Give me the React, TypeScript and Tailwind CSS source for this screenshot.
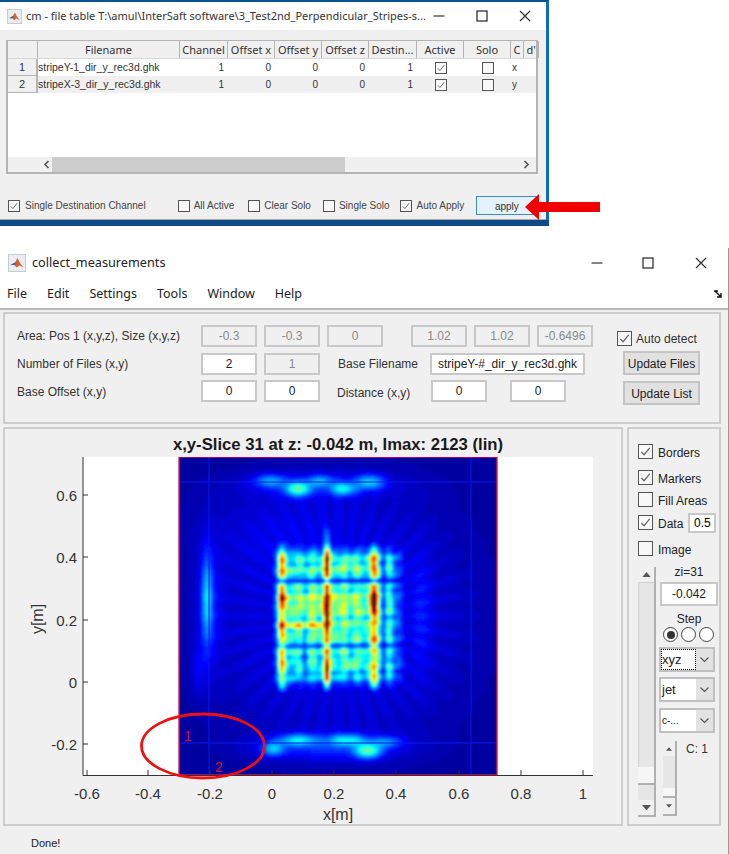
import { useMemo } from "react";

const uiFont = "[font-family:'Noto_Sans',sans-serif]";
const matFont = "[font-family:'Liberation_Sans',sans-serif]";

const columns = [
  { label: "", w: 30 },
  { label: "Filename", w: 142 },
  { label: "Channel", w: 48 },
  { label: "Offset x", w: 47 },
  { label: "Offset y", w: 47 },
  { label: "Offset z", w: 47 },
  { label: "Destin...", w: 48 },
  { label: "Active", w: 47 },
  { label: "Solo", w: 47 },
  { label: "C", w: 13 },
  { label: "d'", w: 15 },
];

const rows = [
  { n: "1", file: "stripeY-1_dir_y_rec3d.ghk", tag: "x", bg: "bg-white" },
  { n: "2", file: "stripeX-3_dir_y_rec3d.ghk", tag: "y", bg: "bg-[#f0f0f0]" },
];

function CheckBox({ checked, size = "w-[15px] h-[15px]" }: { checked?: boolean; size?: string }) {
  return (
    <span className={`${size} shrink-0 border border-[#555] bg-[#f8f8f8] block`}>
      {checked && (
        <svg viewBox="0 0 14 14" className="w-full h-full">
          <path d="M2.5 7.5 L5.5 10.5 L11.5 3" fill="none" stroke="#666" strokeWidth="1.3" />
        </svg>
      )}
    </span>
  );
}

function WinControls({ gapA, gapB }: { gapA: string; gapB: string }) {
  return (
    <div className="flex items-center">
      <svg width="12" height="12" viewBox="0 0 12 12">
        <path d="M0.5 6 H11.5" stroke="#333" strokeWidth="1.2" />
      </svg>
      <svg width="12" height="12" viewBox="0 0 12 12" className={gapA}>
        <rect x="1" y="1" width="10" height="10" fill="none" stroke="#333" strokeWidth="1.3" />
      </svg>
      <svg width="12" height="12" viewBox="0 0 12 12" className={gapB}>
        <path d="M1 1 L11 11 M11 1 L1 11" stroke="#333" strokeWidth="1.2" />
      </svg>
    </div>
  );
}

function MatlabIcon({ className }: { className: string }) {
  return (
    <span className={`${className} block bg-[#e8eef4] border border-[#c4ccd4]`}>
      <svg viewBox="0 0 16 16" className="w-full h-full">
        <path d="M1.5 10 L6 7.5 L8.5 3 L11 8 L14.5 12.5 L10.5 10.5 L7.5 12.5 L5.5 10 Z" fill="#d9622b" />
        <path d="M1.5 10 L6 7.5 L7.5 9 L5.5 10 Z" fill="#2c6fb0" />
      </svg>
    </span>
  );
}

function FileTableWindow() {
  return (
    <div className={`w-[549px] h-[226px] shrink-0 flex flex-col border-t-[2px] border-t-[#0d5390] border-r-[3px] border-r-[#0f6cb4] ${uiFont}`}>
      <div className="h-[28px] bg-white flex items-center justify-between pl-[7px] pr-[15px] shrink-0">
        <div className="flex items-center gap-[4px]">
          <MatlabIcon className="w-[15px] h-[15px]" />
          <span className="text-[11px] text-[#333] whitespace-nowrap">
            cm - file table T:\amul\InterSaft software\3_Test2nd_Perpendicular_Stripes-s...
          </span>
        </div>
        <WinControls gapA="ml-[31px]" gapB="ml-[31px]" />
      </div>
      <div className="flex-1 bg-[#f0f0f0] pt-[10px] pl-[7px] pr-[8px] border-b border-b-[#a8a8a8] flex flex-col">
        <div className="w-[532px] h-[134px] -ml-[1px] bg-white border-x-2 border-t border-b-2 border-[#b4b4b4] flex flex-col shrink-0">
          <div className="h-[18px] flex bg-[#f0f0f0] border-b border-[#d8d8d8] shrink-0">
            {columns.map((c, i) => (
              <div
                key={i}
                style={{ width: c.w }}
                className="shrink-0 border-r border-[#b4b4b4] text-[11px] leading-[18px] text-[#333] text-center overflow-hidden whitespace-nowrap"
              >
                {c.label}
              </div>
            ))}
          </div>
          {rows.map((r) => (
            <div key={r.n} className={`h-[17px] flex items-center shrink-0 ${r.bg} ${matFont} text-[10px] text-[#333]`}>
              <div className="w-[30px] h-full shrink-0 bg-[#f0f0f0] border-r-2 border-b border-[#b4b4b4] text-center text-[11px] leading-[17px]">
                {r.n}
              </div>
              <div className="w-[142px] shrink-0 text-[10.5px] whitespace-nowrap">{r.file}</div>
              <div className="w-[48px] shrink-0 text-right pr-[4px]">1</div>
              <div className="w-[47px] shrink-0 text-right pr-[4px]">0</div>
              <div className="w-[47px] shrink-0 text-right pr-[4px]">0</div>
              <div className="w-[47px] shrink-0 text-right pr-[4px]">0</div>
              <div className="w-[48px] shrink-0 text-right pr-[4px]">1</div>
              <div className="w-[47px] shrink-0 flex justify-center">
                <CheckBox checked size="w-[12px] h-[12px]" />
              </div>
              <div className="w-[47px] shrink-0 flex justify-center">
                <CheckBox size="w-[12px] h-[12px]" />
              </div>
              <div className="w-[13px] shrink-0 pl-[1px]">{r.tag}</div>
            </div>
          ))}
          <div className="flex-1" />
          <div className="h-[15px] flex items-center bg-[#f0f0f0] shrink-0">
            <div className="w-[44px] h-full shrink-0 flex items-center justify-end pr-[2px]">
              <svg width="7" height="9" viewBox="0 0 7 9">
                <path d="M5.5 1 L2 4.5 L5.5 8" fill="none" stroke="#555" strokeWidth="1.6" />
              </svg>
            </div>
            <div className="w-[293px] h-full shrink-0 bg-[#cdcdcd]" />
            <div className="flex-1 flex justify-end pr-[6px]">
              <svg width="7" height="9" viewBox="0 0 7 9">
                <path d="M1.5 1 L5 4.5 L1.5 8" fill="none" stroke="#555" strokeWidth="1.6" />
              </svg>
            </div>
          </div>
        </div>
        <div className={`mt-[22px] flex items-center ${matFont} text-[10px] text-[#444]`}>
          <div className="flex items-center gap-[5px] pl-[1px]">
            <CheckBox checked size="w-[12px] h-[12px]" />
            <span className="whitespace-nowrap">Single Destination Channel</span>
          </div>
          <div className="flex items-center gap-[4px] ml-[32px]">
            <CheckBox size="w-[12px] h-[12px]" />
            <span>All Active</span>
          </div>
          <div className="flex items-center gap-[4px] ml-[14px]">
            <CheckBox size="w-[12px] h-[12px]" />
            <span>Clear Solo</span>
          </div>
          <div className="flex items-center gap-[4px] ml-[12px]">
            <CheckBox size="w-[12px] h-[12px]" />
            <span>Single Solo</span>
          </div>
          <div className="flex items-center gap-[5px] ml-[10px]">
            <CheckBox checked size="w-[12px] h-[12px]" />
            <span>Auto Apply</span>
          </div>
          <div className="w-[61px] h-[19px] ml-[12px] bg-[#e5f1fb] border border-[#3a8bd6] text-center leading-[20px] text-[#333]">
            apply
          </div>
        </div>
      </div>
      <div className="h-[6px] bg-[#0d4a86] -mr-[3px] shrink-0" />
    </div>
  );
}

function Field({ value, disabled, w = "w-[56px]" }: { value: string; disabled?: boolean; w?: string }) {
  return (
    <div
      className={`${w} h-[22px] shrink-0 border-2 border-[#c8c8c8] text-center text-[12px] leading-[18px] ${
        disabled ? "bg-[#f0f0f0] text-[#8a8a8a]" : "bg-white text-[#222]"
      }`}
    >
      {value}
    </div>
  );
}

function ScrollArrow({ up, small }: { up?: boolean; small?: boolean }) {
  const s = small ? 6 : 9;
  return (
    <div className="flex-1 flex items-center justify-center">
      <svg width={s} height={s / 2 + 1} viewBox="0 0 10 6">
        <path d={up ? "M0 6 L5 0 L10 6 Z" : "M0 0 L5 6 L10 0 Z"} fill="#555" />
      </svg>
    </div>
  );
}

function Combo({ label, focus, tiny }: { label: string; focus?: boolean; tiny?: boolean }) {
  return (
    <div className="w-[56px] h-[25px] -ml-[1px] flex border-2 border-[#c0c0c0] bg-white">
      <div className="flex-1 relative flex items-center pl-[1px]">
        <span className={`${tiny ? "text-[10px]" : "text-[13px]"} text-[#222]`}>{label}</span>
        {focus && <span className="absolute inset-0 border border-dotted border-black" />}
      </div>
      <div className="w-[17px] bg-[#e2e2e2] flex items-center justify-center">
        <svg width="9" height="6" viewBox="0 0 9 6">
          <path d="M0.5 0.5 L4.5 4.5 L8.5 0.5" fill="none" stroke="#555" strokeWidth="1.1" />
        </svg>
      </div>
    </div>
  );
}

function SideRow({ label, checked, mt, children }: { label: string; checked?: boolean; mt: string; children?: React.ReactNode }) {
  return (
    <div className={`h-[15px] flex items-center gap-[5px] ${mt}`}>
      <CheckBox checked={checked} />
      <span className="text-[12px] text-[#222] whitespace-nowrap pt-[2px]">{label}</span>
      {children}
    </div>
  );
}

function SidePanel() {
  return (
    <div className={`w-[94px] h-[399px] shrink-0 border-2 border-[#cdcdcd] pt-[15px] pl-[9px] ${matFont}`}>
      <SideRow label="Borders" checked mt="mt-0" />
      <SideRow label="Markers" checked mt="mt-[11px]" />
      <SideRow label="Fill Areas" mt="mt-[7px]" />
      <SideRow label="Data" checked mt="mt-[8px]">
        <div className="w-[28px] h-[20px] shrink-0 bg-white border-2 border-[#c8c8c8] text-center text-[12px] leading-[16px]">0.5</div>
      </SideRow>
      <SideRow label="Image" mt="mt-[11px]" />
      <div className="flex mt-[11px]">
        <div className="w-[18px] h-[250px] shrink-0 flex flex-col bg-[#e6e6e6] border-r-2 border-b-2 border-[#b0b0b0]">
          <div className="h-[16px] bg-[#f0f0f0] border-b border-[#d0d0d0] flex"><ScrollArrow up /></div>
          <div className="h-[184px] border-l border-[#d0d0d0]" />
          <div className="h-[18px] bg-[#f6f6f6] border-b-2 border-[#b0b0b0]" />
          <div className="h-[15px]" />
          <div className="h-[15px] bg-[#f0f0f0] flex"><ScrollArrow /></div>
        </div>
        <div className="w-[58px] ml-[4px] text-[#222]">
          <div className="-mt-[2px] h-[15px] text-[12px] leading-[15px] text-center">zi=31</div>
          <div className="mt-[2px] h-[24px] bg-white border-2 border-[#c8c8c8] text-center text-[12px] leading-[20px]">-0.042</div>
          <div className="mt-[6px] h-[15px] text-[12px] leading-[15px] text-center">Step</div>
          <div className="flex gap-[3px] ml-[3px]">
            <span className="w-[15px] h-[15px] rounded-full border border-[#444] bg-white flex items-center justify-center">
              <span className="w-[8px] h-[8px] rounded-full bg-[#333]" />
            </span>
            <span className="w-[15px] h-[15px] rounded-full border border-[#444] bg-white" />
            <span className="w-[15px] h-[15px] rounded-full border border-[#444] bg-white" />
          </div>
          <div className="mt-[5px]"><Combo label="xyz" focus /></div>
          <div className="mt-[5px]"><Combo label="jet" /></div>
          <div className="mt-[6px]"><Combo label="c-..." tiny /></div>
          <div className="mt-[8px] ml-[3px] flex">
            <div className="w-[14px] h-[75px] flex flex-col bg-[#e6e6e6] border-r-2 border-b-2 border-[#b0b0b0] shrink-0">
              <div className="h-[15px] bg-[#f0f0f0] flex"><ScrollArrow up small /></div>
              <div className="h-[32px]" />
              <div className="h-[8px] bg-[#f6f6f6]" />
              <div className="h-[18px] bg-[#f0f0f0] border-t-2 border-[#b0b0b0] flex"><ScrollArrow small /></div>
            </div>
            <span className="ml-[9px] mt-[1px] text-[12px] leading-[15px] text-[#333] whitespace-nowrap">C: 1</span>
          </div>
        </div>
      </div>
    </div>
  );
}

// jet colour map, v in 0..1
function jet(v: number) {
  const c = (o: number) => Math.round(255 * Math.max(0, Math.min(1, 1.5 - Math.abs(4 * v - o))));
  return `rgb(${c(3)},${c(2)},${c(1)})`;
}
const g = (x: number, m: number, s: number) => Math.exp(-((x - m) * (x - m)) / (2 * s * s));
const step = (a: number, b: number, x: number) => {
  const t = Math.max(0, Math.min(1, (x - a) / (b - a)));
  return t * t * (3 - 2 * t);
};

function heat(x: number, y: number) {
  let v = 0.02;
  // weak haze and fringes around the core
  const dx = x - 338;
  const dy = y - 617;
  const r = Math.sqrt(dx * dx + dy * dy);
  const a = Math.atan2(dy, dx);
  v += 0.03 * g(r, 92, 30) * (0.5 + 0.5 * Math.cos(a * 40));
  v += 0.06 * g(r, 50, 75);
  v += 0.03 * g(x, 260, 60) * g(y, 530, 30);

  const inX = step(270, 284, x) * (1 - step(388, 408, x));
  const inY = step(542, 562, y) * (1 - step(672, 694, y));
  const env = inX * inY;
  const cx = 0.5 + 0.3 * Math.cos(((x - 282) / 15.3) * 2 * Math.PI) + 0.2 * Math.cos((x - 290) / 1.75);
  const cy = 0.5 + 0.3 * Math.cos(((y - 558) / 13.5) * 2 * Math.PI) + 0.2 * Math.cos((y - 600) / 1.45 + x / 40);
  const mid = g(x, 328, 38) * g(y, 612, 36);
  const jitter = Math.sin(x / 3.1 + y / 17) * Math.sin(y / 4.3 - x / 23);
  let core = 0.09 + 0.14 * cx + 0.15 * cy + 0.17 * mid + 0.06 * jitter;
  core += 0.2 * g(y, 627, 2.2) * step(284, 290, x) * (1 - step(318, 326, x));
  core += 0.08 * g(y, 604, 5) * (1 - step(360, 372, x));
  core += 0.12 * g(x, 350, 8) * g(y, 566, 4);
  core += 0.1 * g(x, 352, 8) * g(y, 664, 5);
  core *= 1 - 0.8 * g(y, 582, 2.4);
  core *= 1 - 0.55 * g(y, 647, 2.2);
  core *= 1 - 0.45 * g(x, 304, 1.8) * g(y, 655, 22);
  core *= 1 - 0.5 * g(x, 384, 1.8);
  v += env * core;

  // the three strong vertical stripes
  const band = step(540, 554, y) * (1 - step(682, 696, y)) * (1 - 0.6 * g(y, 582, 2.4));
  const m1 = 0.3 + 0.08 * Math.cos(y / 5) + 0.14 * g(y, 600, 7) + 0.16 * g(y, 576, 4) + 0.1 * g(y, 627, 3);
  const m2 = 0.32 + 0.34 * g(y, 564, 9) + 0.36 * g(y, 608, 12) + 0.36 * g(y, 672, 8) + 0.22 * g(y, 628, 4);
  const m3 = 0.32 + 0.06 * Math.cos(y / 6) + 0.42 * g(y, 601, 10) + 0.08 * g(y, 562, 6);
  v += band * (g(x, 282, 2.8) * m1 + g(x, 327, 2) * m2 + g(x, 374, 2.8) * m3);
  v += 0.14 * g(x, 327, 2.5) * g(y, 540, 8);

  // side lobe on the left
  v += 0.22 * g(x, 207, 3.5) * g(y, 600, 30) + 0.08 * g(x, 209, 9) * g(y, 610, 45) + 0.06 * g(x, 198, 5) * g(y, 672, 18);
  v += 0.06 * g(x, 421, 7) * g(y, 615, 40);

  // top lobes
  v += 0.07 * g(x, 320, 55) * g(y, 486, 9);
  v += 0.2 * g(x, 270, 11) * g(y, 482, 4.5);
  v += 0.34 * g(x, 298, 9) * g(y, 490, 5);
  v += 0.18 * g(x, 320, 9) * g(y, 482, 4);
  v += 0.26 * g(x, 343, 9) * g(y, 490, 4.5);
  v += 0.24 * g(x, 370, 10) * g(y, 483, 5);
  // bottom lobes
  v += 0.12 * g(x, 330, 50) * g(y, 748, 9);
  v += 0.22 * g(x, 273, 8) * g(y, 750, 5);
  v += 0.24 * g(x, 298, 13) * g(y, 741, 4);
  v += 0.24 * g(x, 347, 13) * g(y, 741, 4);
  v += 0.34 * g(x, 368, 9) * g(y, 752, 5);
  v += 0.16 * g(x, 387, 10) * g(y, 743, 4);
  return Math.min(1, v);
}

function HeatMap() {
  const cells = useMemo(() => {
    const buckets: Record<number, string> = {};
    for (let x = 179; x < 497; x += 2) {
      for (let y = 458; y < 776; y += 2) {
        const k = Math.round(heat(x + 1, y + 1) * 63);
        buckets[k] = (buckets[k] || "") + `M${x} ${y}h2v2h-2z`;
      }
    }
    return Object.entries(buckets);
  }, []);
  return (
    <g>
      <defs>
        <clipPath id="heatClip">
          <rect x="179" y="458" width="318" height="318" />
        </clipPath>
        <filter id="soft" x="0" y="0" width="1" height="1">
          <feGaussianBlur stdDeviation="1" />
        </filter>
      </defs>
      <rect x="179" y="458" width="318" height="318" fill="#00009a" />
      <g clipPath="url(#heatClip)">
        <g filter="url(#soft)">
          {cells.map(([k, d]) => (
            <path key={k} d={d} fill={jet(Number(k) / 63)} />
          ))}
        </g>
      </g>
      <path d="M209 458V776 M471 458V776 M179 483H497 M179 744H497" stroke="#0a18ee" strokeWidth="1" fill="none" />
      <rect x="179" y="458" width="318" height="318" fill="none" stroke="#e8183c" strokeWidth="1.4" />
    </g>
  );
}

const xTicks = [
  [87, "-0.6"], [148, "-0.4"], [210, "-0.2"], [272, "0"], [334, "0.2"],
  [396, "0.4"], [459, "0.6"], [521, "0.8"], [583, "1"],
] as const;
const yTicks = [
  [496, "0.6"], [558, "0.4"], [621, "0.2"], [683, "0"], [745, "-0.2"],
] as const;

function PlotPanel() {
  return (
    <div className={`w-[620px] h-[399px] shrink-0 border-2 border-[#cdcdcd] ${matFont}`}>
      <div className="h-[28px] pl-[50px] text-center text-[16.7px] font-bold leading-[31px] text-[#1a1a1a] whitespace-nowrap">
        x,y-Slice 31 at z: -0.042 m, Imax: 2123 (lin)
      </div>
      <svg width="616" height="366" viewBox="5 458 616 366" className="block">
        <rect x="83" y="458" width="510" height="318" fill="white" />
        <HeatMap />
        <path d="M83 458V776.5H593" fill="none" stroke="#333" strokeWidth="1" />
        {xTicks.map(([x]) => (
          <path key={x} d={`M${x} 776V771`} stroke="#333" strokeWidth="1" />
        ))}
        {yTicks.map(([y]) => (
          <path key={y} d={`M83 ${y}H88`} stroke="#333" strokeWidth="1" />
        ))}
        <g fontSize="15" fill="#333" fontFamily="'Liberation Sans',sans-serif">
          {xTicks.map(([x, t]) => (
            <text key={t} x={x} y="800" textAnchor="middle">{t}</text>
          ))}
          {yTicks.map(([y, t]) => (
            <text key={t} x="77" y={y + 6} textAnchor="end">{t}</text>
          ))}
          <text x="338" y="821" fontSize="16" textAnchor="middle">x[m]</text>
          <text x="43" y="620" fontSize="16" textAnchor="middle" transform="rotate(-90 43 620)">y[m]</text>
          <text x="188" y="742" fontSize="14" fill="#d8102c" textAnchor="middle">1</text>
          <text x="219" y="773" fontSize="14" fill="#d8102c" textAnchor="middle">2</text>
        </g>
        <ellipse cx="203" cy="747" rx="61.5" ry="32" fill="none" stroke="#ee1111" strokeWidth="2.8" />
      </svg>
    </div>
  );
}

function CollectWindow() {
  return (
    <div className={`mt-[22px] w-[729px] h-[606px] flex flex-col border-r border-r-[#9a9a9a] ${matFont}`}>
      <div className={`h-[30px] shrink-0 bg-white flex items-center justify-between pl-[8px] pr-[21px] ${uiFont}`}>
        <div className="flex items-center gap-[6px]">
          <MatlabIcon className="w-[18px] h-[18px]" />
          <span className="text-[12.7px] text-[#222]">collect_measurements</span>
        </div>
        <WinControls gapA="ml-[39px]" gapB="ml-[41px]" />
      </div>
      <div className={`h-[30px] shrink-0 bg-white flex items-center gap-[20px] pl-[7px] pt-[3px] text-[12.5px] text-[#222] relative ${uiFont}`}>
        {["File", "Edit", "Settings", "Tools", "Window", "Help"].map((m) => (
          <span key={m}>{m}</span>
        ))}
        <svg width="9" height="8" viewBox="0 0 9 8" className="absolute right-[5px] top-[12px]">
          <path d="M0 1 H4 M1 1 L7 7 M7 3 V7 H3" fill="none" stroke="#111" strokeWidth="1.4" />
        </svg>
      </div>
      <div className="flex-1 bg-[#f0f0f0] border-t-2 border-[#b8b8b8] pl-[3px] pt-[2px]">
        <div className="w-[718px] h-[112px] border-2 border-[#cdcdcd] flex text-[12px] text-[#333]">
          <div className="w-[196px] shrink-0 pl-[12px] pt-[13px]">
            <div className="h-[28px] whitespace-nowrap">Area: Pos 1 (x,y,z), Size (x,y,z)</div>
            <div className="h-[28px] whitespace-nowrap">Number of Files (x,y)</div>
            <div className="whitespace-nowrap">Base Offset (x,y)</div>
          </div>
          <div className="shrink-0 pt-[11px]">
            <div className="flex">
              <Field value="-0.3" disabled />
              <div className="w-[7px]" />
              <Field value="-0.3" disabled />
              <div className="w-[7px]" />
              <Field value="0" disabled />
              <div className="w-[28px]" />
              <Field value="1.02" disabled />
              <div className="w-[7px]" />
              <Field value="1.02" disabled />
              <div className="w-[7px]" />
              <Field value="-0.6496" disabled />
            </div>
            <div className="flex mt-[5px] items-center h-[24px]">
              <Field value="2" />
              <div className="w-[7px]" />
              <Field value="1" disabled />
              <span className="ml-[18px] w-[92px] whitespace-nowrap">Base Filename</span>
              <div className="w-[155px] h-[22px] bg-white border-2 border-[#c8c8c8] text-center leading-[18px] text-[#222] whitespace-nowrap">
                stripeY-#_dir_y_rec3d.ghk
              </div>
            </div>
            <div className="flex mt-[4px] items-center h-[22px]">
              <Field value="0" />
              <div className="w-[7px]" />
              <Field value="0" />
              <span className="ml-[17px] w-[94px] whitespace-nowrap pt-[4px]">Distance (x,y)</span>
              <Field value="0" />
              <div className="w-[23px]" />
              <Field value="0" />
            </div>
          </div>
          <div className="shrink-0 ml-[30px] pt-[17px]">
            <div className="h-[15px] flex items-center gap-[4px] -ml-[6px]">
              <CheckBox checked />
              <span className="whitespace-nowrap">Auto detect</span>
            </div>
            <div className="mt-[5px] w-[77px] h-[24px] bg-[#e1e1e1] border-2 border-[#c4c4c4] text-center leading-[22px] text-[#222]">
              Update Files
            </div>
            <div className="mt-[6px] w-[77px] h-[24px] bg-[#e1e1e1] border-2 border-[#c4c4c4] text-center leading-[22px] text-[#222]">
              Update List
            </div>
          </div>
        </div>
        <div className="flex gap-[4px] mt-[3px]">
          <PlotPanel />
          <SidePanel />
        </div>
        <div className="pl-[28px] pt-[9px] text-[11px] text-[#222]">Done!</div>
      </div>
    </div>
  );
}

export default function App() {
  return (
    <div className="w-[729px] h-[854px] bg-white overflow-hidden relative flex flex-col">
      <FileTableWindow />
      <CollectWindow />
      <svg width="76" height="26" viewBox="0 0 76 26" className="absolute left-[525px] top-[194px]">
        <path d="M75 8 H14 V0 L0 13 L14 26 V18 H75 Z" fill="#f00000" />
      </svg>
    </div>
  );
}
